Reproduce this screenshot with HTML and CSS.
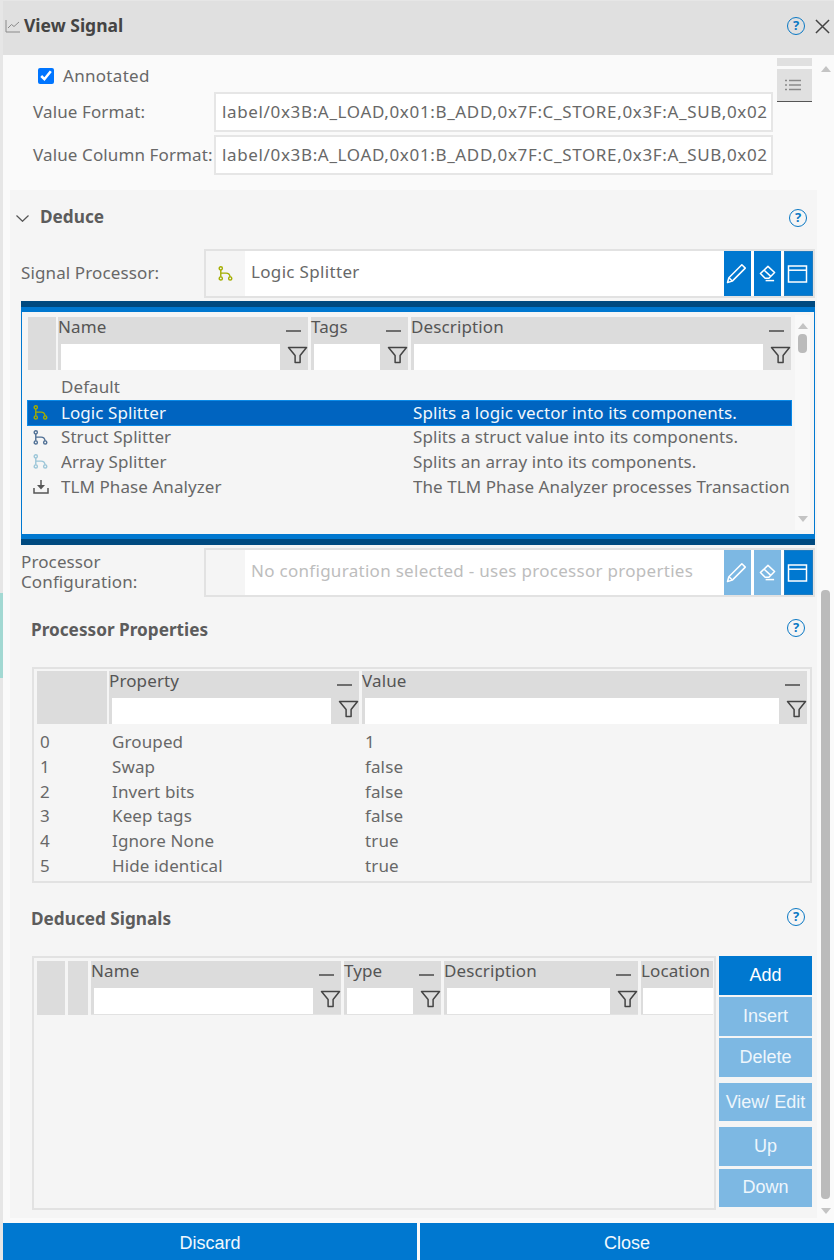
FILE: index.html
```html
<!DOCTYPE html>
<html lang="en">
<head>
<meta charset="utf-8">
<title>View Signal</title>
<link rel="stylesheet" href="styles.css">
</head>
<body>
<svg class="sprites" width="0" height="0" aria-hidden="true">
  <symbol id="i-filter" viewBox="0 0 20 18"><path d="M1 1.5H19L12.6 9.5V16.5H7.6V9.5Z" fill="none" stroke="currentColor" stroke-width="1.5" stroke-linejoin="round"/></symbol>
  <symbol id="i-branch" viewBox="0 0 14 14"><g fill="none" stroke="currentColor" stroke-width="1.3"><circle cx="2.6" cy="2.2" r="1.5"/><circle cx="2.6" cy="11.6" r="1.5"/><circle cx="11.4" cy="11.6" r="1.5"/><path d="M2.6 3.7V10.1M2.6 6.6H7.6Q10.8 6.6 11.3 10.1"/></g></symbol>
  <symbol id="i-pencil" viewBox="0 0 22 22"><g fill="none" stroke="currentColor" stroke-width="1.6" stroke-linejoin="round"><path d="M16.6 1.8L20.2 5.4L6.6 19L1.6 20.4L3 15.4Z"/><path d="M3.2 15.4L6.6 18.8"/></g></symbol>
  <symbol id="i-eraser" viewBox="0 0 18 18"><g fill="none" stroke="currentColor" stroke-width="1.6" stroke-linejoin="round"><path d="M9.5 1.5L16.5 8L10.5 14H6.5L1.5 9Z"/><path d="M5.5 5.5L12.5 12"/><path d="M7 16.5H16"/></g></symbol>
  <symbol id="i-window" viewBox="0 0 20 18"><g fill="none" stroke="currentColor" stroke-width="1.5"><rect x="1" y="1" width="18" height="16"/><path d="M1 5.2H19"/></g></symbol>
</svg>

<div class="window">
  <header class="titlebar">
    <svg class="chart-icon" viewBox="0 0 15 14" aria-hidden="true"><path d="M1 1V13H15M3 9L6.5 5.5L9 7.5L14 3" fill="none" stroke="#8a8a8a" stroke-width="1"/></svg>
    <h1 class="title">View Signal</h1>
    <span class="help help-title">?</span>
    <svg class="close-icon" viewBox="0 0 16 16" aria-hidden="true"><path d="M1 1L15 15M15 1L1 15" fill="none" stroke="#444" stroke-width="1.6"/></svg>
  </header>

  <div class="main">
    <div class="content">
      <section class="top">
        <div class="top-form">
          <label class="annotated"><input type="checkbox" checked> Annotated</label>
          <div class="format-row"><span class="label">Value Format:</span><input class="field" readonly value="label/0x3B:A_LOAD,0x01:B_ADD,0x7F:C_STORE,0x3F:A_SUB,0x02"></div>
          <div class="format-row"><span class="label">Value Column Format:</span><input class="field" readonly value="label/0x3B:A_LOAD,0x01:B_ADD,0x7F:C_STORE,0x3F:A_SUB,0x02"></div>
        </div>
        <div class="side-tools">
          <div class="side-tab"></div>
          <div class="side-btn">
            <svg viewBox="0 0 16 12" aria-hidden="true"><path d="M0 1.5H2M4 1.5H16M0 6H2M4 6H16M0 10.5H2M4 10.5H16" stroke="#8a8a8a" stroke-width="1.3"/></svg>
          </div>
        </div>
      </section>

      <section class="deduce">
        <div class="deduce-head">
          <svg class="chevron" viewBox="0 0 13 7" aria-hidden="true"><path d="M.5.5L6.5 6.3L12.5.5" fill="none" stroke="#555" stroke-width="1.2"/></svg>
          <h2 class="section-title">Deduce</h2>
          <span class="help">?</span>
        </div>

        <div class="picker-row">
          <span class="label">Signal Processor:</span>
          <div class="picker">
            <span class="picker-icon"><svg class="branch olive"><use href="#i-branch"/></svg></span>
            <span class="picker-text">Logic Splitter</span>
            <button class="tool"><svg class="ico-pencil"><use href="#i-pencil"/></svg></button>
            <button class="tool"><svg class="ico-eraser"><use href="#i-eraser"/></svg></button>
            <button class="tool tool-wide"><svg class="ico-window"><use href="#i-window"/></svg></button>
          </div>
        </div>

        <div class="dropdown">
          <div class="dropdown-inner">
            <div class="dropdown-table">
              <div class="thead cols-proc">
                <div class="th-blank"></div>
                <div class="th"><span class="th-name">Name</span><i class="dash"></i><span class="th-input"></span><span class="th-filter"><svg><use href="#i-filter"/></svg></span></div>
                <div class="th"><span class="th-name">Tags</span><i class="dash"></i><span class="th-input"></span><span class="th-filter"><svg><use href="#i-filter"/></svg></span></div>
                <div class="th"><span class="th-name">Description</span><i class="dash"></i><span class="th-input"></span><span class="th-filter"><svg><use href="#i-filter"/></svg></span></div>
              </div>
              <div class="proc-rows">
                <div class="proc-row"><span></span><span>Default</span><span></span></div>
                <div class="proc-row selected"><span><svg class="branch olive"><use href="#i-branch"/></svg></span><span>Logic Splitter</span><span>Splits a logic vector into its components.</span></div>
                <div class="proc-row"><span><svg class="branch slate"><use href="#i-branch"/></svg></span><span>Struct Splitter</span><span>Splits a struct value into its components.</span></div>
                <div class="proc-row"><span><svg class="branch pale"><use href="#i-branch"/></svg></span><span>Array Splitter</span><span>Splits an array into its components.</span></div>
                <div class="proc-row"><span><svg class="download" viewBox="0 0 16 15"><path d="M1 9V14H15V9" fill="none" stroke="#555" stroke-width="1.5"/><path d="M8 1V9" stroke="#555" stroke-width="1.5"/><path d="M4 6H12L8 10.5Z" fill="#555"/></svg></span><span>TLM Phase Analyzer</span><span>The TLM Phase Analyzer processes Transaction</span></div>
              </div>
            </div>
            <div class="mini-scroll">
              <i class="arrow-up"></i>
              <i class="mini-thumb"></i>
              <i class="arrow-down"></i>
            </div>
          </div>
        </div>

        <div class="picker-row config-row">
          <span class="label">Processor Configuration:</span>
          <div class="picker">
            <span class="picker-icon"></span>
            <span class="picker-text placeholder">No configuration selected - uses processor properties</span>
            <button class="tool off"><svg class="ico-pencil"><use href="#i-pencil"/></svg></button>
            <button class="tool off"><svg class="ico-eraser"><use href="#i-eraser"/></svg></button>
            <button class="tool tool-wide"><svg class="ico-window"><use href="#i-window"/></svg></button>
          </div>
        </div>

        <div class="sub-head props-head">
          <h2 class="section-title">Processor Properties</h2>
          <span class="help">?</span>
        </div>
        <div class="table props-table">
          <div class="thead cols-props">
            <div class="th-blank"></div>
            <div class="th"><span class="th-name">Property</span><i class="dash"></i><span class="th-input"></span><span class="th-filter"><svg><use href="#i-filter"/></svg></span></div>
            <div class="th"><span class="th-name">Value</span><i class="dash"></i><span class="th-input"></span><span class="th-filter"><svg><use href="#i-filter"/></svg></span></div>
          </div>
          <div class="prop-rows">
            <div class="prop-row"><span>0</span><span>Grouped</span><span>1</span></div>
            <div class="prop-row"><span>1</span><span>Swap</span><span>false</span></div>
            <div class="prop-row"><span>2</span><span>Invert bits</span><span>false</span></div>
            <div class="prop-row"><span>3</span><span>Keep tags</span><span>false</span></div>
            <div class="prop-row"><span>4</span><span>Ignore None</span><span>true</span></div>
            <div class="prop-row"><span>5</span><span>Hide identical</span><span>true</span></div>
          </div>
        </div>

        <div class="sub-head signals-head">
          <h2 class="section-title">Deduced Signals</h2>
          <span class="help">?</span>
        </div>
        <div class="signals">
          <div class="table signals-table">
            <div class="thead cols-signals">
              <div class="th-blank"></div>
              <div class="th-blank"></div>
              <div class="th"><span class="th-name">Name</span><i class="dash"></i><span class="th-input"></span><span class="th-filter"><svg><use href="#i-filter"/></svg></span></div>
              <div class="th"><span class="th-name">Type</span><i class="dash"></i><span class="th-input"></span><span class="th-filter"><svg><use href="#i-filter"/></svg></span></div>
              <div class="th"><span class="th-name">Description</span><i class="dash"></i><span class="th-input"></span><span class="th-filter"><svg><use href="#i-filter"/></svg></span></div>
              <div class="th th-clipped"><span class="th-name">Location</span><span class="th-input"></span></div>
            </div>
          </div>
          <div class="actions">
            <div class="action-group group-edit">
              <button class="action">Add</button>
              <button class="action off">Insert</button>
              <button class="action off">Delete</button>
            </div>
            <div class="action-group group-view">
              <button class="action off">View/ Edit</button>
            </div>
            <div class="action-group group-move">
              <button class="action off">Up</button>
              <button class="action off">Down</button>
            </div>
          </div>
        </div>
      </section>
    </div>

    <div class="page-scroll">
      <i class="arrow-up"></i>
      <i class="page-thumb"></i>
      <i class="arrow-down"></i>
    </div>
  </div>

  <footer class="footer">
    <button class="foot-btn">Discard</button>
    <button class="foot-btn">Close</button>
  </footer>
</div>
</body>
</html>
```

FILE: styles.css
```css
* { box-sizing: border-box; }

html, body { margin: 0; padding: 0; }

body {
  width: 834px;
  height: 1260px;
  overflow: hidden;
  font-family: "Noto Sans", sans-serif;
  font-size: 17px;
  letter-spacing: 0.12px;
  color: #686868;
  background: linear-gradient(to bottom, #e6e6e6 0, #e6e6e6 593px, #a3d9d3 593px, #a3d9d3 678px, #e6e6e6 678px);
}

.sprites { position: absolute; }

.window {
  margin: 1px 0 0 3px;
  width: 831px;
  height: 1259px;
  display: flex;
  flex-direction: column;
  background: #fafafa;
}

/* title bar */
.titlebar {
  height: 54px;
  flex: none;
  background: #e0e0e0;
  display: flex;
  align-items: flex-start;
  padding: 18px 4px 0 2px;
}
.chart-icon { width: 15px; height: 14px; flex: none; }
.title {
  margin: -5px 0 0 4px;
  font-size: 17.5px;
  line-height: 22px;
  font-weight: 700;
  letter-spacing: 0;
  color: #444;
  flex: 1;
}
.close-icon { width: 15px; height: 15px; margin-left: 10px; flex: none; }

.help {
  width: 18px;
  height: 18px;
  flex: none;
  border: 1.7px solid #0a78c4;
  border-radius: 50%;
  color: #0a78c4;
  font-size: 13px;
  font-weight: 700;
  line-height: 14px;
  letter-spacing: 0;
  text-align: center;
}
.help-title { margin-top: -2px; }

/* main */
.main { flex: 1; display: flex; min-height: 0; }
.content { width: 814px; flex: none; }

.top { height: 135px; display: flex; }
.top-form { width: 771px; padding-top: 13px; }
.annotated {
  display: flex;
  align-items: center;
  gap: 9px;
  height: 16px;
  margin: 0 0 8px 35px;
  line-height: 16px;
  letter-spacing: 0.3px;
}
.annotated input { width: 16px; height: 16px; margin: -1px 0 0; accent-color: #0075ff; }

.format-row {
  display: grid;
  grid-template-columns: 182px 1fr;
  align-items: center;
  height: 40px;
  margin-bottom: 3px;
  padding-left: 30px;
}
.label { white-space: normal; line-height: 20px; }
.field {
  width: 100%;
  height: 40px;
  margin-left: -1px;
  border: 2px solid #e6e6e6;
  background: #fff;
  padding: 0 0 1px 6px;
  font: inherit;
  letter-spacing: 0.65px;
  color: #686868;
  outline: none;
}

.side-tools { width: 35px; margin-left: 3px; padding-top: 3px; }
.side-tab { height: 8px; background: #e0e0e0; margin-bottom: 3px; }
.side-btn {
  height: 33px;
  background: #e0e0e0;
  border-bottom: 1px solid #555;
  display: flex;
  align-items: center;
  justify-content: center;
  padding-right: 3px;
}
.side-btn svg { width: 16px; height: 12px; }

/* deduce */
.deduce { margin-left: 7px; width: 807px; height: 1028px; background: #f5f5f5; }
.deduce-head {
  height: 59px;
  display: flex;
  align-items: center;
  padding: 0 10px 0 6px;
}
.chevron { width: 13px; height: 7px; flex: none; margin-top: -3px; }
.section-title {
  margin: 0;
  font-size: 17.2px;
  font-weight: 700;
  letter-spacing: 0;
  color: #5c5c5c;
  flex: 1;
  line-height: 22px;
}
.deduce-head .section-title { margin: -6px 0 0 11px; }
.deduce-head .help { margin-top: -4px; }

.picker-row {
  display: grid;
  grid-template-columns: 183px 611px;
  align-items: center;
  padding-left: 11px;
  height: 49px;
}
.picker-row .label { margin-top: -2px; }
.picker {
  height: 49px;
  border: 2px solid #e2e2e2;
  display: flex;
  background: #fff;
  gap: 3px;
}
.picker-icon {
  width: 39px;
  flex: none;
  margin-right: -3px;
  background: #f5f5f5;
  display: flex;
  align-items: center;
  justify-content: center;
}
.picker-text { flex: 1; padding: 0 0 1px 6px; line-height: 41px; white-space: nowrap; overflow: hidden; letter-spacing: 0.33px; }
.placeholder { color: #bdbdbd; letter-spacing: 0.29px; }
.tool {
  width: 27px;
  flex: none;
  border: 0;
  padding: 0;
  background: #0078d0;
  color: #fff;
  display: flex;
  align-items: center;
  justify-content: center;
}
.tool-wide { width: 29px; border: 1px solid #1f7cc0; padding-right: 3px; }
.tool.off { background: #7db8e3; }
.ico-pencil { width: 21px; height: 21px; margin-left: -2px; }
.ico-eraser { width: 17px; height: 17px; }
.ico-window { width: 21px; height: 18px; flex: none; }

.branch { width: 15px; height: 15px; display: block; }
.olive { color: #a3ad00; }
.slate { color: #4f6f94; }
.pale { color: #9cc6d8; }
.download { width: 16px; height: 15px; display: block; }

/* dropdown */
.dropdown {
  margin: 3px 2px 3px 11px;
  height: 244px;
  border-top: 6px solid #004a80;
  border-bottom: 6px solid #004a80;
  background: #0078d0;
  padding: 5px 0;
}
.dropdown-inner {
  height: 222px;
  margin: 0 1px;
  background: #f5f5f5;
  display: flex;
}
.dropdown-table { width: 770px; flex: none; padding: 5px 0 0 6px; }
.mini-scroll {
  width: 15px;
  margin: 3px 0 4px 3px;
  flex: none;
  background: #f9f9f9;
  display: flex;
  flex-direction: column;
  align-items: center;
  padding-top: 8px;
}
.mini-thumb { width: 9px; height: 19px; background: #bbb; border-radius: 4px; margin-top: 5px; }
.mini-scroll .arrow-down { margin-top: auto; margin-bottom: 8px; }

.arrow-up, .arrow-down {
  width: 0;
  height: 0;
  border-left: 5.5px solid transparent;
  border-right: 5.5px solid transparent;
  flex: none;
}
.arrow-up { border-bottom: 6px solid #c4c4c4; }
.arrow-down { border-top: 6px solid #c4c4c4; }

/* tables */
.thead { display: grid; height: 53px; column-gap: 3px; }
.cols-proc { grid-template-columns: 27px 250px 97px 380px; }
.cols-props { grid-template-columns: 69px 250px 445px; }
.cols-signals { grid-template-columns: 28px 20px 250px 97px 194px 72px; }
.cols-proc .th-blank, .cols-props .th-blank { margin-right: -1px; }

.th-blank { background: #dcdcdc; }
.th {
  background: #dcdcdc;
  display: grid;
  grid-template-columns: 1fr 28px;
  grid-template-rows: 27px 26px;
  min-width: 0;
  color: #555;
}
.th-name { line-height: 20px; white-space: nowrap; grid-column: 1; grid-row: 1; }
.dash { grid-column: 2; grid-row: 1; align-self: center; justify-self: start; width: 15px; height: 2px; margin-left: 6px; background: #6e6e6e; }
.th-input { grid-column: 1; grid-row: 2; background: #fff; margin-left: 3px; }
.th-filter { grid-column: 2; grid-row: 2; display: flex; align-items: flex-start; justify-content: flex-end; padding-top: 2px; color: #444; }
.th-filter svg { width: 21px; height: 18px; display: block; }
.th-clipped { grid-template-columns: 1fr; }
.th-clipped .th-input { margin-left: 2px; }

.proc-rows { margin: 5px 0 0 -1px; letter-spacing: 0.07px; }
.proc-row {
  height: 24.8px;
  width: 765px;
  display: grid;
  grid-template-columns: 33px 352px 378px;
  align-items: center;
  line-height: 24px;
  white-space: nowrap;
  border: 1px solid transparent;
}
.proc-row > span { overflow: hidden; }
.proc-row > span:first-child { padding-left: 5px; }
.proc-row.selected { background: #0064c0; border-color: #0a8ae8; color: #f2f7fc; height: 26px; margin-bottom: -1.2px; }

.table { border: 2px solid #e2e2e2; padding: 3px; }
.props-table { margin: 0 5px 0 22px; height: 216px; padding-top: 2px; }
.prop-rows { margin-top: 5.6px; }
.prop-row {
  height: 24.8px;
  display: grid;
  grid-template-columns: 72px 253px 1fr;
  align-items: center;
  padding-left: 3px;
  line-height: 24px;
}

.sub-head { display: flex; align-items: center; padding: 0 12px 0 21px; }
.props-head { height: 70px; }
.props-head .section-title { margin-top: -4px; }
.props-head .help { margin-top: -8px; }
.signals-head { height: 73px; }
.signals-head .section-title { margin-top: -2px; }
.signals-head .help { margin-top: -5px; }

.signals { margin-left: 22px; display: flex; gap: 3px; }
.signals-table { width: 684px; height: 254px; overflow: hidden; }
.signals-table .th { border-bottom: 1px solid #e2e2e2; }
.actions { width: 93px; flex: none; display: flex; flex-direction: column; }
.action-group { display: flex; flex-direction: column; }
.group-edit { height: 121px; gap: 2.5px; }
.group-view { height: 38px; margin-top: 6px; }
.group-move { height: 80px; margin-top: 6px; gap: 3px; }
.action {
  flex: 1;
  border: 0;
  padding: 0;
  background: #0078d0;
  color: #fff;
  font: 18px "Liberation Sans", Arial, sans-serif;
}
.action.off { background: #7db8e3; color: #eef6fc; }

/* page scrollbar */
.page-scroll {
  width: 17px;
  flex: none;
  display: flex;
  flex-direction: column;
  align-items: center;
  padding-top: 11px;
}
.page-thumb { width: 9px; height: 609px; margin-top: 518px; background: #bbb; border-radius: 4px; }
.page-scroll .arrow-down { margin-top: 9px; }

/* footer */
.footer { height: 37px; flex: none; display: flex; gap: 3px; }
.foot-btn {
  flex: 1;
  border: 0;
  padding: 4px 0 0;
  background: #0078d0;
  color: #f2f8fd;
  font: 18px "Liberation Sans", Arial, sans-serif;
}
```
